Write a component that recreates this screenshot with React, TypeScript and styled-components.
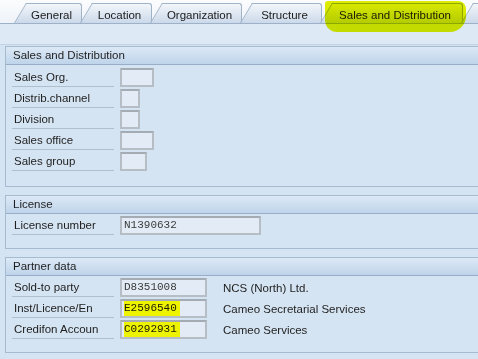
import React from "react";
import { createGlobalStyle, styled } from "styled-components";

const GlobalStyle = createGlobalStyle`
  body {
    margin: 0;
    background: #d5e4f2;
    font-family: "Liberation Sans", Arial, sans-serif;
    font-size: 11.5px;
    color: #1e1e1e;
  }
`;

const Screen = styled.div`
  width: 478px;
  height: 359px;
  overflow: hidden;
  background: #d5e4f2;
`;

const TabStrip = styled.div`
  position: relative;
  display: flex;
  align-items: flex-end;
  height: 24px;
  padding-left: 26px;
  background: linear-gradient(#fbfcfd, #eef3f9);
  border-bottom: 1px solid #9db2c8;
  box-sizing: border-box;
`;

const Tab = styled.div<{ $w: number }>`
  position: relative;
  flex: none;
  width: ${(p) => p.$w}px;
  height: 20px;
  margin-right: 10px;
  display: flex;
  align-items: center;
  justify-content: center;
  padding: 2px 4px 0 0;
  box-sizing: border-box;
  background: linear-gradient(#f3f6fa, #cbd9ea);
  border-top: 1px solid #9fb3c8;
  border-right: 1px solid #9fb3c8;
  border-radius: 0 3px 0 0;
  color: #1b1b1b;
  white-space: nowrap;

  &::before {
    content: "";
    position: absolute;
    left: -12px;
    top: -1px;
    bottom: 0;
    width: 14px;
    background: linear-gradient(#f3f6fa, #cbd9ea);
    border-left: 1px solid #9fb3c8;
    border-top: 1px solid #9fb3c8;
    transform: skewX(-31deg);
    transform-origin: bottom left;
    z-index: 0;
  }

  span {
    position: relative;
    z-index: 1;
  }
`;

const Marker = styled.div`
  position: absolute;
  left: 325px;
  top: 1px;
  width: 141px;
  height: 31px;
  background: #e2f000;
  mix-blend-mode: multiply;
  border-radius: 3px 8px 16px 12px;
  z-index: 2;
`;

const Band = styled.div`
  height: 20px;
  background: #dde9f5;
  border-bottom: 1px solid #c2d3e4;
`;

const Content = styled.div`
  display: flex;
  flex-direction: column;
  gap: 8px;
  padding: 1px 0 0 5px;
`;

const Group = styled.div`
  border: 1px solid #a6bbd0;
  border-right: none;
  background: #d5e4f2;
`;

const GroupHeader = styled.div`
  height: 17px;
  line-height: 17px;
  padding-left: 7px;
  background: linear-gradient(#dce9f6, #bfd4ea);
  border-bottom: 1px solid #97aec6;
  color: #1e1e1e;
`;

const GroupBody = styled.div<{ $pt: number; $pb: number }>`
  display: flex;
  flex-direction: column;
  padding: ${(p) => p.$pt}px 0 ${(p) => p.$pb}px 6px;
`;

const Row = styled.div`
  display: flex;
  align-items: center;
  height: 21px;
`;

const Label = styled.div`
  width: 102px;
  height: 19px;
  line-height: 19px;
  padding-left: 2px;
  box-sizing: border-box;
  border-bottom: 1px solid #aebfd0;
  margin-right: 6px;
  white-space: nowrap;
`;

const Field = styled.div<{ $w: number }>`
  width: ${(p) => p.$w}px;
  height: 19px;
  box-sizing: border-box;
  border: 2px solid #b7bdc4;
  border-top-color: #a5abb2;
  background: #e3ecf6;
  padding-left: 2px;
  font-family: "Liberation Mono", "Courier New", monospace;
  font-size: 11px;
  line-height: 15px;
  color: #3a3a3a;
`;

const Highlight = styled.span`
  background: #eef300;
  color: #202000;
  display: inline-block;
  padding: 0 3px 0 0;
  line-height: 15px;
`;

const Description = styled.div`
  margin-left: 16px;
  white-space: nowrap;
`;

const salesRows = [
  { label: "Sales Org.", w: 34 },
  { label: "Distrib.channel", w: 20 },
  { label: "Division", w: 20 },
  { label: "Sales office", w: 34 },
  { label: "Sales group", w: 27 },
];

const partnerRows = [
  { label: "Sold-to party", value: "D8351008", desc: "NCS (North) Ltd.", hl: false },
  { label: "Inst/Licence/En", value: "E2596540", desc: "Cameo Secretarial Services", hl: true },
  { label: "Credifon Accoun", value: "C0292931", desc: "Cameo Services", hl: true },
];

const tabs = [
  { title: "General", w: 56 },
  { title: "Location", w: 60 },
  { title: "Organization", w: 80 },
  { title: "Structure", w: 70 },
  { title: "Sales and Distribution", w: 131 },
  { title: "S", w: 30 },
];

export default function App() {
  return (
    <Screen>
      <GlobalStyle />
      <TabStrip>
        {tabs.map((t) => (
          <Tab key={t.title} $w={t.w}>
            <span>{t.title}</span>
          </Tab>
        ))}
        <Marker />
      </TabStrip>
      <Band />
      <Content>
        <Group>
          <GroupHeader>Sales and Distribution</GroupHeader>
          <GroupBody $pt={2} $pb={14}>
            {salesRows.map((r) => (
              <Row key={r.label}>
                <Label>{r.label}</Label>
                <Field $w={r.w} />
              </Row>
            ))}
          </GroupBody>
        </Group>
        <Group>
          <GroupHeader>License</GroupHeader>
          <GroupBody $pt={1} $pb={12}>
            <Row>
              <Label>License number</Label>
              <Field $w={141}>N1390632</Field>
            </Row>
          </GroupBody>
        </Group>
        <Group>
          <GroupHeader>Partner data</GroupHeader>
          <GroupBody $pt={1} $pb={12}>
            {partnerRows.map((r) => (
              <Row key={r.label}>
                <Label>{r.label}</Label>
                <Field $w={87}>
                  {r.hl ? <Highlight>{r.value}</Highlight> : r.value}
                </Field>
                <Description>{r.desc}</Description>
              </Row>
            ))}
          </GroupBody>
        </Group>
      </Content>
    </Screen>
  );
}
